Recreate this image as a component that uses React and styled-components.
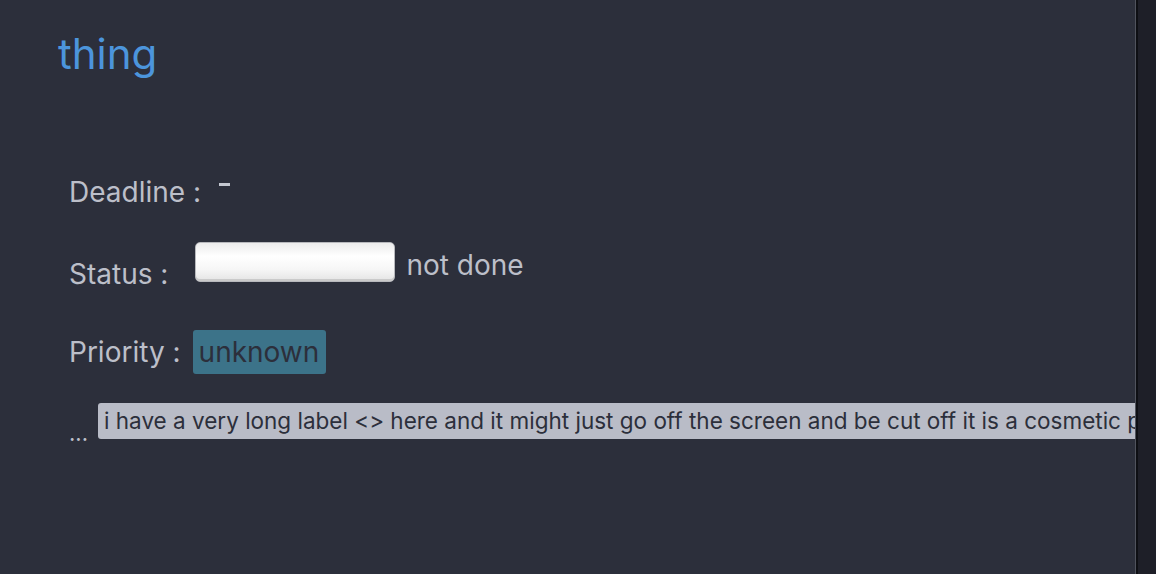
import React from "react";
import styled, { createGlobalStyle } from "styled-components";

const GlobalStyle = createGlobalStyle`
  html, body {
    margin: 0;
    padding: 0;
    height: 100%;
    background: #1e1f28;
  }
  #root {
    height: 100%;
  }
`;

const Layout = styled.div`
  display: flex;
  height: 574px;
  font-family: Inter, "Noto Sans", sans-serif;
`;

const Main = styled.main`
  flex: 0 0 1136px;
  background: #2c2f3b;
  border-right: 1px solid #50535d;
  overflow: hidden;
  padding: 28px 0 0 58px;
  box-sizing: border-box;
`;

const Divider = styled.div`
  flex: 0 0 2px;
  background: #0e0f14;
`;

const Side = styled.aside`
  flex: 1;
  background: #1e1f28;
`;

const Title = styled.h1`
  margin: 0;
  font-size: 42px;
  font-weight: 400;
  color: #4c95dc;
  line-height: 52px;
`;

const Fields = styled.div`
  display: flex;
  flex-direction: column;
  padding: 92px 0 0 11px;
`;

const Row = styled.div`
  display: flex;
  align-items: center;
  height: ${(p) => p.$h || 40}px;
  margin-top: ${(p) => p.$mt || 0}px;
  color: #bcbfc9;
  font-size: 28px;
  white-space: nowrap;
`;

const Text = styled.span`
  padding-top: ${(p) => p.$drop || 0}px;
  margin-right: ${(p) => p.$gap || 0}px;
`;

const Dash = styled.span`
  align-self: flex-start;
  margin-top: 11px;
  width: 11px;
  height: 3px;
  background: #c4c7d0;
`;

const StatusBox = styled.div`
  width: 198px;
  height: 38px;
  border: 1px solid #b8b9bd;
  border-radius: 5px;
  background: linear-gradient(#ececec, #ffffff 35%, #f6f6f6 70%, #e4e4e4);
  box-shadow: inset 0 -2px 0 #cacaca;
  margin-right: 11px;
`;

const Badge = styled.span`
  background: #3c7389;
  color: #2c2f3b;
  border-radius: 3px;
  line-height: 34px;
  padding: 5px 7px 5px 6px;
`;

const Dots = styled.span`
  align-self: flex-end;
  font-size: 22px;
  line-height: 22px;
  margin-right: 10px;
  margin-bottom: -5px;
`;

const Chip = styled.span`
  background: #b9bcc7;
  color: #2c2f3b;
  font-size: 22.5px;
  line-height: 36px;
  padding: 0 6px;
  border-radius: 3px;
`;

export default function App() {
  return (
    <>
      <GlobalStyle />
      <Layout>
        <Main>
          <Title>thing</Title>
          <Fields>
            <Row>
              <Text $gap={18}>Deadline :</Text>
              <Dash />
            </Row>
            <Row $mt={30}>
              <Text $gap={27} $drop={24}>Status :</Text>
              <StatusBox />
              <Text $drop={6}>not done</Text>
            </Row>
            <Row $mt={48} $h={44}>
              <Text $gap={12}>Priority :</Text>
              <Badge>unknown</Badge>
            </Row>
            <Row $mt={29} $h={36}>
              <Dots>...</Dots>
              <Chip>
                i have a very long label &lt;&gt; here and it might just go off the
                screen and be cut off it is a cosmetic problem
              </Chip>
            </Row>
          </Fields>
        </Main>
        <Divider />
        <Side />
      </Layout>
    </>
  );
}
